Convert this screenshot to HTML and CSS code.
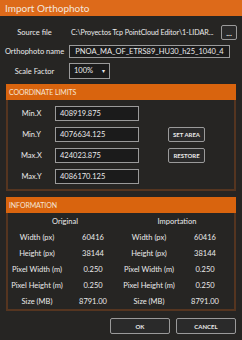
FILE: index.html
```html
<!DOCTYPE html>
<html lang="en">
<head>
    <meta charset="UTF-8">
    <meta name="viewport" content="width=device-width, initial-scale=1.0">
    <title>Import Orthophoto</title>
    <link rel="stylesheet" href="styles.css">
</head>
<body>
    <div class="window">
        <div class="titlebar">Import Orthophoto</div>

        <div class="form">
            <label class="form-label">Source file</label>
            <div class="form-value source">
                <span class="path">C:\Proyectos Tcp PointCloud Editor\1-LIDAR...</span>
                <button class="btn btn-browse">...</button>
            </div>

            <label class="form-label">Orthophoto name</label>
            <div class="form-value">
                <div class="input input-name">PNOA_MA_OF_ETRS89_HU30_h25_1040_4</div>
            </div>

            <label class="form-label">Scale Factor</label>
            <div class="form-value">
                <div class="input select">100% <span class="caret">&#9662;</span></div>
            </div>
        </div>

        <div class="panel">
            <div class="panel-header">COORDINATE LIMITS</div>
            <div class="panel-body coords">
                <span class="coord-label">Min.X</span>
                <div class="input coord-input">408919.875</div>
                <span></span>

                <span class="coord-label">Min.Y</span>
                <div class="input coord-input">4076634.125</div>
                <button class="btn btn-small">SET AREA</button>

                <span class="coord-label">Max.X</span>
                <div class="input coord-input">424023.875</div>
                <button class="btn btn-small">RESTORE</button>

                <span class="coord-label">Max.Y</span>
                <div class="input coord-input">4086170.125</div>
                <span></span>
            </div>
        </div>

        <div class="panel">
            <div class="panel-header">INFORMATION</div>
            <div class="panel-body info">
                <span class="info-head">Original</span>
                <span class="info-head">Importation</span>

                <span>Width (px)</span><span>60416</span>
                <span>Width (px)</span><span>60416</span>

                <span>Height (px)</span><span>38144</span>
                <span>Height (px)</span><span>38144</span>

                <span>Pixel Width (m)</span><span>0.250</span>
                <span>Pixel Width (m)</span><span>0.250</span>

                <span>Pixel Height (m)</span><span>0.250</span>
                <span>Pixel Height (m)</span><span>0.250</span>

                <span>Size (MB)</span><span>8791.00</span>
                <span>Size (MB)</span><span>8791.00</span>
            </div>
        </div>

        <div class="actions">
            <button class="btn btn-action">OK</button>
            <button class="btn btn-action">CANCEL</button>
        </div>
    </div>
</body>
</html>
```

FILE: styles.css
```css
* {
    margin: 0;
    padding: 0;
    box-sizing: border-box;
}

body {
    font-family: Lato, 'Liberation Sans', sans-serif;
    font-size: 7.5px;
    color: #ebebeb;
    background: #252525;
}

.window {
    width: 242px;
    height: 340px;
    overflow: hidden;
    background: #262523;
}

/* Title bar */
.titlebar {
    height: 16px;
    line-height: 16px;
    padding-left: 5px;
    background: #dd6a1a;
    color: #f4e6dc;
    font-size: 10px;
}

/* Top form */
.form {
    display: grid;
    grid-template-columns: 69px minmax(0, 1fr);
    grid-template-rows: 15px 13px 16px;
    row-gap: 5px;
    align-items: center;
    padding: 9px 5px 0 0;
}

.form-label {
    text-align: center;
    white-space: nowrap;
}

.form-value {
    display: flex;
    align-items: center;
    min-width: 0;
}

.source {
    height: 15px;
    gap: 2px;
}

.path {
    flex: 1;
    min-width: 0;
    padding-left: 2px;
    font-size: 7.2px;
    letter-spacing: -0.1px;
    white-space: nowrap;
}

.input {
    height: 13px;
    line-height: 11px;
    border: 1px solid #9a9a9a;
    background: #1b1b1b;
    padding: 0 4px;
    white-space: nowrap;
}

.input-name {
    width: 161px;
    text-align: center;
}

.select {
    width: 41px;
    height: 16px;
    line-height: 14px;
    display: flex;
    justify-content: space-between;
}

.caret {
    font-size: 6px;
}

.btn {
    font-family: inherit;
    color: #ebebeb;
    background: #2a2a2a;
    border: 1px solid #9a9a9a;
    border-radius: 2px;
    font-weight: bold;
    white-space: nowrap;
}

.btn-browse {
    width: 16px;
    height: 15px;
    font-size: 8px;
    line-height: 8px;
    flex-shrink: 0;
}

/* Panels */
.panel {
    margin: 5px 6px 0;
    border: 2px solid #553520;
}

.panel + .panel {
    margin-top: 6px;
}

.panel-header {
    height: 16px;
    line-height: 16px;
    padding-left: 3px;
    margin: -2px -2px 0;
    background: #d9640e;
    color: #f6e4d6;
    font-size: 7px;
    letter-spacing: -0.1px;
}

.coords {
    display: grid;
    grid-template-columns: 47px 84px 1fr;
    grid-auto-rows: 15px;
    row-gap: 6px;
    align-items: center;
    padding: 6px 0 5px;
}

.coord-label {
    text-align: center;
}

.coord-input {
    height: 15px;
    line-height: 13px;
    padding-left: 4px;
}

.btn-small {
    justify-self: center;
    height: 15px;
    padding: 0 4px;
    font-size: 6px;
}

.info {
    display: grid;
    grid-template-columns: repeat(4, 56px);
    grid-auto-rows: 16px;
    align-items: center;
    text-align: center;
    white-space: nowrap;
    margin-left: 1px;
}

.info-head {
    grid-column: span 2;
}

/* Bottom buttons */
.actions {
    display: flex;
    justify-content: flex-end;
    gap: 6px;
    padding: 7px 6px 0;
}

.btn-action {
    width: 60px;
    height: 16px;
    font-size: 6px;
}
```
